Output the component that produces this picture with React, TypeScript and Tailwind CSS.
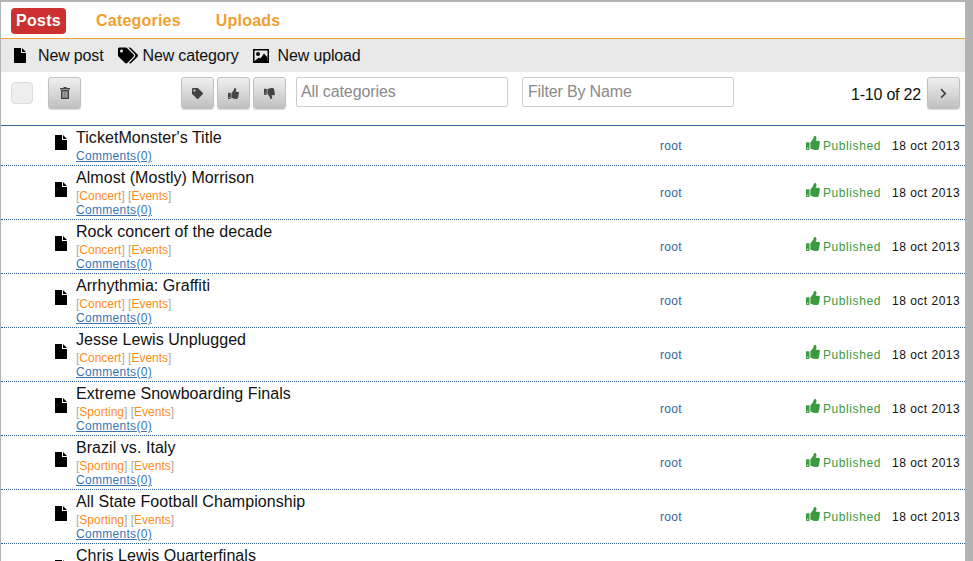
import { FaTags, FaTag, FaThumbsUp, FaThumbsDown, FaChevronRight } from 'react-icons/fa';
import type { ReactNode } from 'react';

interface Post {
  title: string;
  tags: string[];
}

const posts: Post[] = [
  { title: "TicketMonster's Title", tags: [] },
  { title: 'Almost (Mostly) Morrison', tags: ['Concert', 'Events'] },
  { title: 'Rock concert of the decade', tags: ['Concert', 'Events'] },
  { title: 'Arrhythmia: Graffiti', tags: ['Concert', 'Events'] },
  { title: 'Jesse Lewis Unplugged', tags: ['Concert', 'Events'] },
  { title: 'Extreme Snowboarding Finals', tags: ['Sporting', 'Events'] },
  { title: 'Brazil vs. Italy', tags: ['Sporting', 'Events'] },
  { title: 'All State Football Championship', tags: ['Sporting', 'Events'] },
  { title: 'Chris Lewis Quarterfinals', tags: ['Sporting', 'Events'] },
];

const FileIcon = ({ className }: { className: string }) => (
  <svg viewBox="0 0 12 15" className={className} fill="currentColor">
    <path d="M0 0H7V5H12V15H0Z" />
    <path d="M8 0L12 4H8Z" />
  </svg>
);

const PictureIcon = ({ className }: { className: string }) => (
  <svg viewBox="0 0 16 14" className={className} fill="currentColor">
    <path fillRule="evenodd" d="M0 0H16V14H0ZM1.5 1.5V12H14.5V1.5Z" />
    <circle cx="5" cy="5" r="2" />
    <path d="M1.5 12L6 8.5L7.5 9.5L11 4.5L14.5 8.5V12Z" />
  </svg>
);

const TrashIcon = ({ className }: { className: string }) => (
  <svg viewBox="0 0 10 12" className={className} fill="currentColor">
    <path d="M3.5 0H6.5V1H10V2.4H0V1H3.5Z" />
    <path fillRule="evenodd" d="M1 3H9V12H1ZM2.6 4.2V10.8H3.6V4.2ZM4.5 4.2V10.8H5.5V4.2ZM6.4 4.2V10.8H7.4V4.2Z" />
  </svg>
);

const ToolButton = ({ children }: { children: ReactNode }) => (
  <button className="flex h-[32px] w-[33px] items-center justify-center rounded-[3px] border border-[#c0c0c0] bg-gradient-to-b from-[#f0f0f0] to-[#c0c0c0] text-[#444] shadow-[0_1px_1px_rgba(0,0,0,0.15)]">
    {children}
  </button>
);

const App = () => {
  return (
    <div className="h-[561px] overflow-hidden border-t-2 border-l border-[#b3b3b3] bg-[#b3b3b3] font-['Liberation_Sans',sans-serif] text-[#111]">
      <div className="mr-[8px] h-full overflow-hidden bg-white">
        <div className="flex h-[37px] items-center gap-[30px] border-b border-[#f0a030] pl-[10px] pt-[1px] text-[16px] font-bold tracking-[0.2px] text-[#f0a030]">
          <span className="rounded-[4px] bg-[#cc3030] px-[5px] py-[2px] leading-[22px] tracking-[0.3px] text-white">Posts</span>
          <span>Categories</span>
          <span className="ml-[5px]">Uploads</span>
        </div>

        <div className="flex h-[33px] items-center bg-[#e9e9e9] pl-[13px] text-[16px] tracking-[-0.15px]">
          <FileIcon className="h-[15px] w-[12px] text-black" />
          <span className="ml-[12px]">New post</span>
          <FaTags className="ml-[14px] h-[19px] w-[20px] text-black" />
          <span className="ml-[5px]">New category</span>
          <PictureIcon className="ml-[14px] h-[14px] w-[16px] text-black" />
          <span className="ml-[9px]">New upload</span>
        </div>

        <div className="flex h-[54px] items-start border-b border-[#369] pt-[5px]">
          <div className="ml-[10px] mt-[5px] h-[22px] w-[22px] rounded-[4px] border border-[#ddd] bg-[#eee]" />
          <div className="ml-[15px]">
            <ToolButton><TrashIcon className="h-[12px] w-[10px]" /></ToolButton>
          </div>
          <div className="ml-[100px] flex gap-[3px]">
            <ToolButton><FaTag className="h-[11px] w-[11px]" /></ToolButton>
            <ToolButton><FaThumbsUp className="h-[11px] w-[11px]" /></ToolButton>
            <ToolButton><FaThumbsDown className="h-[11px] w-[11px]" /></ToolButton>
          </div>
          <input placeholder="All categories" className="ml-[10px] h-[30px] w-[212px] rounded-[2px] border border-[#ccc] px-[4px] text-[16px] tracking-[-0.1px] placeholder:text-[#8a8a8a]" />
          <input placeholder="Filter By Name" className="ml-[14px] h-[30px] w-[212px] rounded-[2px] border border-[#ccc] px-[5px] text-[16px] tracking-[-0.15px] placeholder:text-[#8a8a8a]" />
          <span className="ml-auto mt-[6px] text-[16px] tracking-[-0.2px]">1-10 of 22</span>
          <div className="ml-[6px] mr-[5px]">
            <ToolButton><FaChevronRight className="h-[11px] w-[11px]" /></ToolButton>
          </div>
        </div>

        {posts.map((post, index) => (
          <div
            key={index}
            className={`flex items-center border-b border-dotted border-[#2f6090] ${post.tags.length ? 'h-[54px]' : 'h-[40px]'}`}
          >
            <FileIcon className="mb-[6px] ml-[54px] h-[15px] w-[12px] shrink-0 text-black" />
            <div className="ml-[9px] w-[584px] self-start pt-[2px]">
              <div className="text-[16px] leading-[20px] tracking-[0.05px]">{post.title}</div>
              <div className="mt-[1px]">
                {post.tags.length > 0 && (
                  <div className="text-[12px] leading-[14px] text-[#aaa]">
                    {post.tags.map((tag, i) => (
                      <span key={tag}>
                        {i > 0 && ' '}[<span className="text-[#ff8c1a]">{tag}</span>]
                      </span>
                    ))}
                  </div>
                )}
                <div className="text-[12px] leading-[14px] tracking-[0.3px] text-[#3a75b0] underline">Comments(0)</div>
              </div>
            </div>
            <span className="text-[12px] tracking-[0.3px] text-[#369]">root</span>
            <FaThumbsUp className="mb-[6px] ml-[124px] h-[14px] w-[14px] text-[#3c9a40]" />
            <span className="ml-[3px] text-[12px] tracking-[0.6px] text-[#3c9a40]">Published</span>
            <span className="ml-[11px] text-[12px] tracking-[0.5px]">18 oct 2013</span>
          </div>
        ))}
      </div>
    </div>
  );
};

export default App;
